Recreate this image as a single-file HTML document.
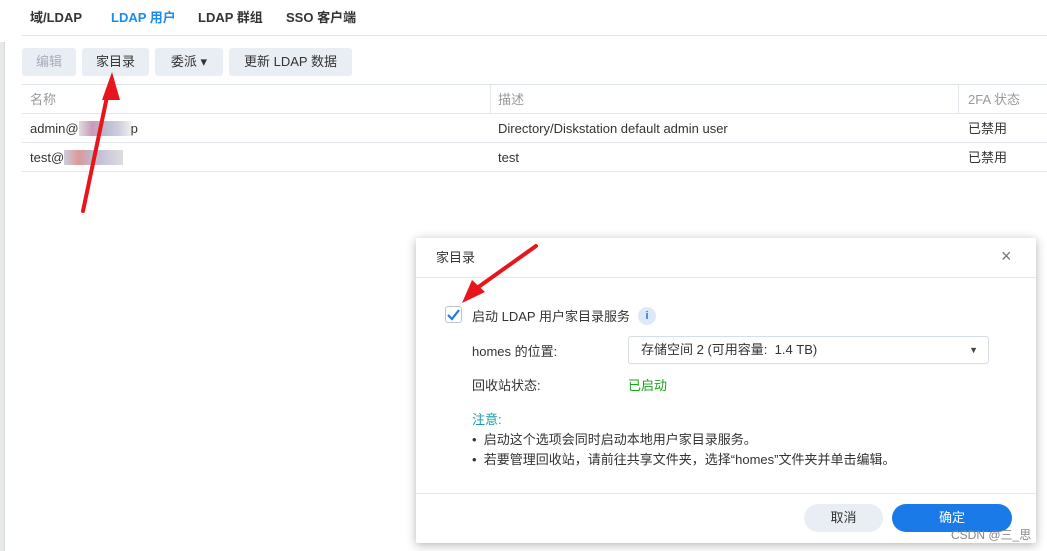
<!DOCTYPE html>
<html><head><meta charset="utf-8"><style>
*{margin:0;padding:0;box-sizing:border-box}
body{width:1047px;height:551px;overflow:hidden;background:#fff;font-family:"Liberation Sans","Noto Sans CJK SC",sans-serif;font-size:13px;line-height:16px;color:#333;position:relative}
.abs{position:absolute;line-height:16px}
.tab{position:absolute;top:10px;font-weight:bold;font-size:13px;line-height:16px;color:#333}
.btn{position:absolute;top:48px;height:28px;background:#e9eef4;border-radius:3px;font-size:13px;line-height:28px;text-align:center;color:#333}
.line{position:absolute;height:1px;background:#e3e8ee}
</style></head><body>
<div class="abs" style="left:0;top:42px;width:5px;height:509px;background:#e6e8ea;border-right:1px solid #d5d8db"></div>
<div class="tab" style="left:30px">域/LDAP</div>
<div class="tab" style="left:111px;color:#1a8cf0">LDAP 用户</div>
<div class="tab" style="left:198px">LDAP 群组</div>
<div class="tab" style="left:286px">SSO 客户端</div>
<div class="line" style="left:22px;top:35px;width:1025px;background:#dde3ea"></div>
<div class="btn" style="left:22px;width:54px;color:#aab">编辑</div>
<div class="btn" style="left:82px;width:67px">家目录</div>
<div class="btn" style="left:155px;width:68px">委派 ▾</div>
<div class="btn" style="left:229px;width:123px">更新 LDAP 数据</div>
<div class="line" style="left:22px;top:84px;width:1025px;background:#dde3ea"></div>
<div class="abs" style="left:30px;top:92px;color:#999">名称</div>
<div class="abs" style="left:498px;top:92px;color:#999">描述</div>
<div class="abs" style="left:968px;top:92px;color:#999">2FA 状态</div>
<div class="abs" style="left:490px;top:85px;width:1px;height:28px;background:#e3e8ee"></div>
<div class="abs" style="left:958px;top:85px;width:1px;height:28px;background:#e3e8ee"></div>
<div class="line" style="left:22px;top:113px;width:1025px"></div>
<div class="abs" style="left:30px;top:121px">admin@<span style="background:linear-gradient(90deg,#ddd,#c9b,#bbc,#ccd,#eee);color:transparent">xxxxxxxx</span>p</div>
<div class="abs" style="left:498px;top:121px">Directory/Diskstation default admin user</div>
<div class="abs" style="left:968px;top:121px">已禁用</div>
<div class="line" style="left:22px;top:142px;width:1025px"></div>
<div class="abs" style="left:30px;top:150px">test@<span style="background:linear-gradient(90deg,#ccd,#d99,#bbc,#ccd,#ddd);color:transparent">xxxxxxxxx</span></div>
<div class="abs" style="left:498px;top:150px">test</div>
<div class="abs" style="left:968px;top:150px">已禁用</div>
<div class="line" style="left:22px;top:171px;width:1025px"></div>

<div class="abs" style="left:416px;top:238px;width:620px;height:305px;background:#fff;box-shadow:0 2px 10px rgba(0,0,0,.3);border-radius:2px">
 <div class="abs" style="left:20px;top:12px">家目录</div>
 <div class="abs" style="left:585px;top:10px;font-size:18px;color:#777">×</div>
 <div class="abs" style="left:0;top:39px;width:620px;height:1px;background:#e3e8ee"></div>
 <div class="abs" style="left:29px;top:68px;width:17px;height:17px;border:1px solid #b8c4d0;border-radius:3px"><svg width="15" height="15" viewBox="0 0 15 15" style="position:absolute;left:0;top:0"><path d="M2 8 L6 12 L13 3" stroke="#1a7be0" stroke-width="2.2" fill="none"/></svg></div>
 <div class="abs" style="left:56px;top:71px">启动 LDAP 用户家目录服务</div>
 <div class="abs" style="left:222px;top:69px;width:18px;height:18px;border-radius:9px;background:#dbe9fa;color:#1a7be0;font-size:11px;font-weight:bold;text-align:center;line-height:18px">i</div>
 <div class="abs" style="left:56px;top:106px">homes 的位置:</div>
 <div class="abs" style="left:212px;top:98px;width:361px;height:28px;border:1px solid #d5dde6;border-radius:3px;padding-left:12px;line-height:26px">存储空间 2 (可用容量:&nbsp; 1.4 TB)<span style="position:absolute;right:10px;font-size:9px;color:#444">▼</span></div>
 <div class="abs" style="left:56px;top:140px">回收站状态:</div>
 <div class="abs" style="left:212px;top:140px;color:#1aa31a">已启动</div>
 <div class="abs" style="left:56px;top:174px;color:#1a9aa8">注意:</div>
 <div class="abs" style="left:56px;top:194px">•&nbsp; 启动这个选项会同时启动本地用户家目录服务。</div>
 <div class="abs" style="left:56px;top:214px">•&nbsp; 若要管理回收站，请前往共享文件夹，选择“homes”文件夹并单击编辑。</div>
 <div class="abs" style="left:0;top:255px;width:620px;height:1px;background:#e3e8ee"></div>
 <div class="abs" style="left:388px;top:266px;width:79px;height:28px;border-radius:14px;background:#e9eef4;text-align:center;line-height:28px">取消</div>
 <div class="abs" style="left:476px;top:266px;width:120px;height:28px;border-radius:14px;background:#1a7be8;color:#fff;text-align:center;line-height:28px">确定</div>
 <div class="abs" style="left:535px;top:289px;font-size:12px;color:#888">CSDN @三_思</div>
</div>

<svg class="abs" style="left:0;top:0" width="1047" height="551">
 <path d="M83 211 L108 92" stroke="#e8161c" stroke-width="4" stroke-linecap="round"/>
 <path d="M102 100 L112 72 L120 100 Z" fill="#e8161c"/>
 <path d="M536 246 L470 293" stroke="#e8161c" stroke-width="4" stroke-linecap="round"/>
 <path d="M462 303 L472 280 L485 292 Z" fill="#e8161c"/>
</svg>
</body></html>
